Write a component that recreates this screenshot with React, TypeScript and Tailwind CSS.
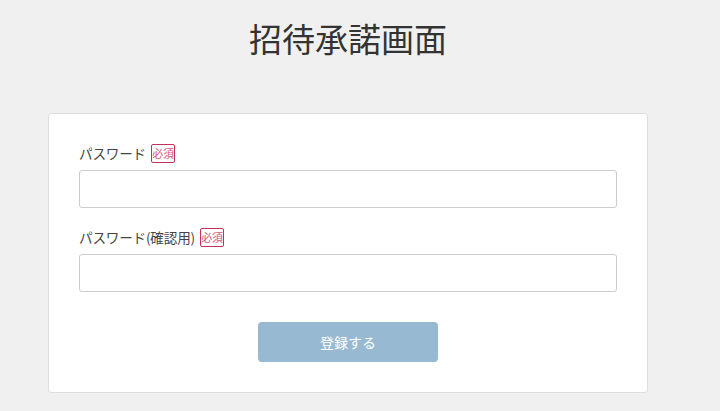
import React from "react";

function Required() {
  return (
    <span className="ml-[5px] inline-flex h-[19px] w-[24px] items-center justify-center rounded-[2px] border border-[#c4305a] text-[11px] leading-none text-[#d45478]">
      必須
    </span>
  );
}

function Field({ label }: { label: string }) {
  return (
    <div>
      <div className="flex h-[21px] items-center text-[13.6px] tracking-[-0.2px] text-[#444]">
        <span>{label}</span>
        <Required />
      </div>
      <input
        type="password"
        className="mt-[6px] block h-[38px] w-full rounded-[3px] border border-[#cccccc] bg-white px-3 outline-none"
      />
    </div>
  );
}

export default function App() {
  return (
    <div
      className="min-h-[411px] bg-[#f0f0f0]"
      style={{ fontFamily: '"Noto Sans CJK JP", "Noto Sans", sans-serif' }}
    >
      <div className="ml-[48px] w-[600px] pt-[14px]">
        <h1 className="text-center text-[33px] leading-[48px] text-[#333]">招待承諾画面</h1>
        <div className="mt-[51px] rounded-[3px] border border-[#dddddd] bg-white px-[30px] pt-[29px] pb-[30px]">
          <div className="flex flex-col gap-[19px]">
            <Field label="パスワード" />
            <Field label="パスワード(確認用)" />
          </div>
          <div className="mt-[30px] flex justify-center">
            <button className="h-[40px] w-[180px] rounded-[4px] bg-[#97b9d1] text-[14px] text-white">
              登録する
            </button>
          </div>
        </div>
      </div>
    </div>
  );
}
